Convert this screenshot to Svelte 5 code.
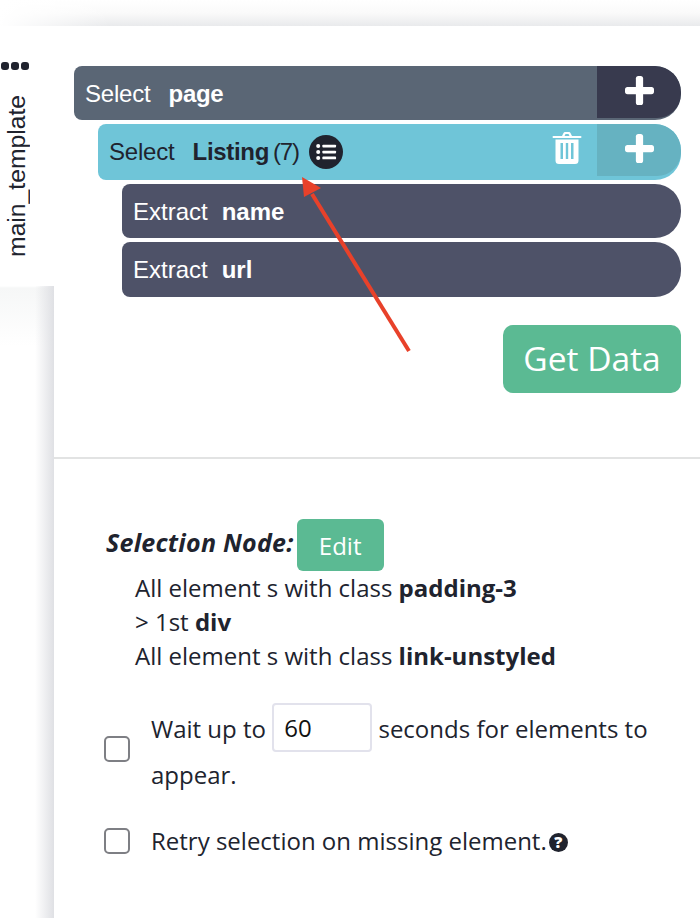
<script lang="ts">
	interface Node {
		verb: string;
		name: string;
		kind: 'root' | 'active' | 'leaf';
		depth: number;
	}

	const nodes: Node[] = [
		{ verb: 'Select', name: 'page', kind: 'root', depth: 0 },
		{ verb: 'Select', name: 'Listing', kind: 'active', depth: 1 },
		{ verb: 'Extract', name: 'name', kind: 'leaf', depth: 2 },
		{ verb: 'Extract', name: 'url', kind: 'leaf', depth: 2 }
	];
</script>

<div class="page">
	<div class="top-shadow"></div>
	<div class="body">
		<aside class="rail"></aside>
		<main class="panel">
			<section class="tree">
				{#each nodes as node}
					<div class="node {node.kind} depth-{node.depth}">
						<span class="verb">{node.verb}</span>
						<strong class="name">{node.name}</strong>
						{#if node.kind === 'active'}
							<span class="count">(7)</span>
							<span class="list-badge">
								<svg viewBox="0 0 24 24" width="22" height="22" fill="#fff">
									<circle cx="3.5" cy="5.5" r="2.2" />
									<circle cx="3.5" cy="12" r="2.2" />
									<circle cx="3.5" cy="18.5" r="2.2" />
									<rect x="8" y="4" width="15" height="3" rx="1" />
									<rect x="8" y="10.5" width="15" height="3" rx="1" />
									<rect x="8" y="17" width="15" height="3" rx="1" />
								</svg>
							</span>
							<svg class="trash" viewBox="0 0 30 32" width="30" height="32" fill="#fff">
								<path d="M10 4 L11.5 1 Q12 0 13 0 H17 Q18 0 18.5 1 L20 4 H28.5 Q29.5 4 29.5 5 Q29.5 6 28.5 6 H1.5 Q0.500 6 0.500 5 Q0.500 4 1.500 4 Z M12.500 4 H17.500 L16.500 2 H13.500 Z" fill-rule="evenodd" />
								<path d="M3.500 7.500 H26.500 V28.500 Q26.500 32 23 32 H7 Q3.500 32 3.500 28.500 Z M8.500 11 V27 H11 V11 Z M13.800 11 V27 H16.200 V11 Z M19 11 V27 H21.500 V11 Z" fill-rule="evenodd" />
							</svg>
						{/if}
						{#if node.kind !== 'leaf'}
							<button class="add" aria-label="Add">
								<svg viewBox="0 0 28 28" width="29" height="29" fill="#fff">
									<rect x="10.500" y="0" width="7" height="28" rx="2.500" />
									<rect x="0" y="10.500" width="28" height="7" rx="2.500" />
								</svg>
							</button>
						{/if}
					</div>
				{/each}
				<div class="actions">
					<button class="get-data">Get Data</button>
				</div>
			</section>

			<section class="details">
				<div class="node-title">
					<em>Selection Node:</em>
					<button class="edit">Edit</button>
				</div>
				<ul class="path">
					<li>All element s with class <b>padding-3</b></li>
					<li>&gt; 1st <b>div</b></li>
					<li>All element s with class <b>link-unstyled</b></li>
				</ul>

				<label class="option wait">
					<input type="checkbox" />
					<span>Wait up to <input class="seconds" type="text" value="60" /> seconds for elements to appear.</span>
				</label>
				<label class="option retry">
					<input type="checkbox" />
					<span>Retry selection on missing element.<i class="help">?</i></span>
				</label>
			</section>
		</main>
	</div>

	<div class="tab">
		<div class="dots"><i></i><i></i><i></i></div>
		<div class="tab-label">main_template</div>
	</div>

	<svg class="arrow" width="700" height="918" viewBox="0 0 700 918">
		<line x1="409" y1="351" x2="312" y2="194" stroke="#e8412a" stroke-width="4" />
		<polygon points="302,177 321,188 304,197" fill="#e8412a" />
	</svg>
</div>

<style>
	:global(body) {
		background: #fff;
	}

	.page {
		position: relative;
		width: 700px;
		height: 918px;
		overflow: hidden;
		background: #fff;
		font-family: 'Open Sans', sans-serif;
		color: #20232e;
	}

	.top-shadow {
		height: 26px;
		background:
			linear-gradient(to right, #fff, rgba(255, 255, 255, 0) 110px),
			linear-gradient(to bottom, #fff, #fafafa 50%, #e9eaec);
	}

	.body {
		display: grid;
		grid-template-columns: 54px 1fr;
		height: 892px;
	}

	.rail {
		background:
			linear-gradient(to right, rgba(255, 255, 255, 0) 65%, #dfe0e4),
			linear-gradient(to bottom, #fff 260px, #f6f7f7 262px, #fff 320px);
	}

	.panel {
		background: #fff;
	}

	.tree {
		padding: 40px 19px 64px 20px;
		border-bottom: 2px solid #e2e3e3;
		display: flex;
		flex-direction: column;
		gap: 4px;
	}

	.node {
		position: relative;
		display: flex;
		align-items: center;
		height: 54px;
		padding-left: 11px;
		border-radius: 8px 26px 26px 8px;
		overflow: hidden;
		font-family: 'Liberation Sans', Arial, sans-serif;
		font-size: 24px;
		letter-spacing: -0.2px;
		color: #fff;
	}

	.depth-1 {
		margin-left: 24px;
	}

	.depth-2 {
		margin-left: 48px;
	}

	.root {
		background: #5a6675;
		padding-top: 1px;
		box-sizing: border-box;
	}

	.active {
		height: 56px;
		background: #6fc5d8;
		color: #20232e;
	}

	.leaf {
		background: #4e5268;
		box-sizing: border-box;
		padding-top: 1px;
	}

	.leaf + .leaf {
		height: 55px;
	}

	.verb {
		margin-right: 18px;
	}

	.leaf .verb {
		margin-right: 14px;
		letter-spacing: 0;
	}

	.name {
		font-weight: 700;
		letter-spacing: -0.3px;
	}

	.leaf .name {
		letter-spacing: 0;
	}

	.count {
		margin-left: 4px;
		letter-spacing: -1.2px;
	}

	.list-badge {
		display: flex;
		align-items: center;
		justify-content: center;
		width: 34px;
		height: 34px;
		margin-left: 10px;
		border-radius: 50%;
		background: #20232e;
	}

	.trash {
		position: absolute;
		right: 99px;
		top: 8px;
	}

	.add {
		position: absolute;
		right: 0;
		top: 0;
		width: 84px;
		height: 52px;
		display: flex;
		align-items: center;
		justify-content: center;
		padding: 0 0 4px;
		border: 0;
		border-radius: 0 26px 24px 0;
		background: #383a4e;
	}

	.active .add {
		background: #66b2c1;
	}

	.actions {
		display: flex;
		justify-content: flex-end;
		margin-top: 24px;
	}

	.get-data {
		width: 178px;
		height: 68px;
		padding: 0 0 2px;
		border: 0;
		border-radius: 10px;
		background: #5bba93;
		color: #fff;
		font-family: 'Open Sans', sans-serif;
		font-size: 33.5px;
	}

	.details {
		padding: 60px 20px 0 52px;
		font-size: 24px;
		line-height: 34px;
	}

	.node-title {
		display: flex;
		align-items: center;
		gap: 3px;
	}

	.node-title em {
		font-size: 25px;
		font-weight: 700;
		font-style: italic;
		letter-spacing: 0.25px;
		margin-top: -6px;
	}

	.edit {
		width: 87px;
		height: 52px;
		border: 0;
		border-radius: 6px;
		background: #5bba93;
		color: #fff;
		font-family: 'Open Sans', sans-serif;
		font-size: 24px;
	}

	.path {
		list-style: none;
		margin: 0;
		padding: 0 0 0 29px;
	}

	.path b,
	.node-title em {
		color: #20232e;
	}

	.option {
		display: grid;
		grid-template-columns: 26px 1fr;
		column-gap: 21px;
		align-items: center;
		margin-left: -2px;
	}

	.option input[type='checkbox'] {
		appearance: none;
		width: 26px;
		height: 26px;
		margin: 0;
		border: 2px solid #7e7f84;
		border-radius: 5px;
		background: #fff;
	}

	.wait {
		margin-top: 33px;
		line-height: 46px;
	}

	.option.wait input[type='checkbox'] {
		margin-bottom: 6px;
	}

	.retry {
		margin-top: 26px;
	}

	.seconds {
		box-sizing: border-box;
		width: 100px;
		height: 49px;
		margin: -6px 0;
		padding: 0 10px;
		border: 2px solid #e2e2ec;
		border-radius: 4px;
		font-family: 'Open Sans', sans-serif;
		font-size: 24px;
		color: #111;
		vertical-align: middle;
		position: relative;
		top: -4px;
	}

	.help {
		display: inline-flex;
		align-items: center;
		justify-content: center;
		width: 19px;
		height: 19px;
		margin-left: 2px;
		border-radius: 50%;
		background: #20232e;
		color: #fff;
		font-size: 16px;
		font-weight: 800;
		font-style: normal;
		line-height: 1;
		vertical-align: 2px;
	}

	.tab {
		position: absolute;
		left: 0;
		top: 26px;
		width: 66px;
		height: 260px;
		background: #fff;
	}

	.dots {
		position: absolute;
		left: 1px;
		top: 36px;
		display: flex;
		gap: 2px;
	}

	.dots i {
		width: 8px;
		height: 8px;
		border-radius: 3px;
		background: #20232e;
	}

	.tab-label {
		position: absolute;
		left: 2px;
		top: 69px;
		writing-mode: vertical-rl;
		transform: rotate(180deg);
		font-family: 'Liberation Sans', Arial, sans-serif;
		font-size: 24.7px;
		line-height: 30px;
		color: #20232e;
	}

	.arrow {
		position: absolute;
		left: 0;
		top: 0;
		pointer-events: none;
	}
</style>
